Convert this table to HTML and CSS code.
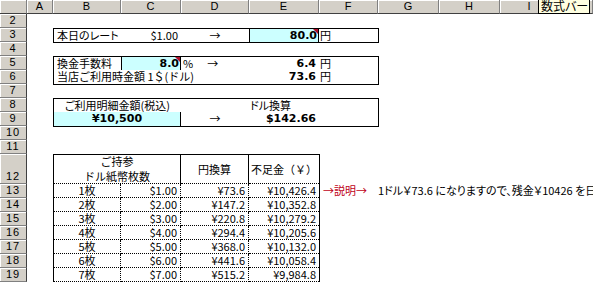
FILE: index.html
```html
<!DOCTYPE html>
<html lang="ja">
<head>
<meta charset="UTF-8">
<title>ドル換算シート</title>
<link rel="stylesheet" href="styles.css">
</head>
<body>
<div class="sheet">
	<div class="corner"></div>
	<div class="col-head">A</div>
	<div class="col-head">B</div>
	<div class="col-head">C</div>
	<div class="col-head">D</div>
	<div class="col-head">E</div>
	<div class="col-head">F</div>
	<div class="col-head">G</div>
	<div class="col-head">H</div>
	<div class="col-head">I</div>
	<div class="col-head">J</div>

	<div class="row-head">2</div>
	<div class="row-head">3</div>
	<div class="row-head">4</div>
	<div class="row-head">5</div>
	<div class="row-head">6</div>
	<div class="row-head">7</div>
	<div class="row-head">8</div>
	<div class="row-head">9</div>
	<div class="row-head">10</div>
	<div class="row-head">11</div>
	<div class="row-head tall">12</div>
	<div class="row-head">13</div>
	<div class="row-head">14</div>
	<div class="row-head">15</div>
	<div class="row-head">16</div>
	<div class="row-head">17</div>
	<div class="row-head">18</div>
	<div class="row-head">19</div>

	<!-- 本日のレート -->
	<div class="box rate">
		<div class="c">本日のレート</div>
		<div class="c num">$1.00</div>
		<div class="c mid">→</div>
		<div class="c num bold fill flag edge">80.0</div>
		<div class="c yen">円</div>
	</div>

	<!-- 手数料 -->
	<div class="box fee">
		<div class="c">換金手数料</div>
		<div class="c num bold fill flag edge">8.0</div>
		<div class="c pct"><span>%</span><span class="arrow">→</span></div>
		<div class="c num bold">6.4</div>
		<div class="c yen">円</div>
		<div class="c wide">当店ご利用時金額 1＄(ドル)</div>
		<div class="c num bold">73.6</div>
		<div class="c yen">円</div>
	</div>

	<!-- 明細 -->
	<div class="box bill">
		<div class="c mid pair">ご利用明細金額(税込)</div>
		<div class="c"></div>
		<div class="c label">ドル換算</div>
		<div class="c"></div>
		<div class="c mid pair bold fill total">¥10,500</div>
		<div class="c mid">→</div>
		<div class="c num bold">$142.66</div>
		<div class="c"></div>
	</div>

	<!-- 枚数ごとの不足金 -->
	<div class="box cash">
		<div class="th pair">ご持参<br>ドル紙幣枚数</div>
		<div class="th">円換算</div>
		<div class="th last">不足金（￥）</div>

		<div class="td mid">1枚</div><div class="td num">$1.00</div><div class="td num">¥73.6</div><div class="td num last">¥10,426.4</div>
		<div class="td mid">2枚</div><div class="td num">$2.00</div><div class="td num">¥147.2</div><div class="td num last">¥10,352.8</div>
		<div class="td mid">3枚</div><div class="td num">$3.00</div><div class="td num">¥220.8</div><div class="td num last">¥10,279.2</div>
		<div class="td mid">4枚</div><div class="td num">$4.00</div><div class="td num">¥294.4</div><div class="td num last">¥10,205.6</div>
		<div class="td mid">5枚</div><div class="td num">$5.00</div><div class="td num">¥368.0</div><div class="td num last">¥10,132.0</div>
		<div class="td mid">6枚</div><div class="td num">$6.00</div><div class="td num">¥441.6</div><div class="td num last">¥10,058.4</div>
		<div class="td mid">7枚</div><div class="td num">$7.00</div><div class="td num">¥515.2</div><div class="td num last">¥9,984.8</div>
	</div>

	<div class="note">
		<span class="mark">→説明→</span>
		<span class="text">1ドル￥73.6 になりますので、残金￥10426 を日本円でお支払いください。</span>
	</div>

	<div class="tip">数式バー</div>
</div>
</body>
</html>
```

FILE: styles.css
```css
body{
	margin: 0;
	background: #fff;
	overflow: hidden;
}
.sheet{
	position: relative;
	display: grid;
	grid-template-columns: 27px 26px 68px 60px 68px 70px 59px 61px 61px 59px 1fr;
	grid-template-rows: repeat(11, 14px) 30px repeat(7, 14px);
	width: 593px;
	height: 282px;
	font: 11px/13px "Noto Sans CJK JP", sans-serif;
	font-feature-settings: "palt";
	color: #000;
}

/* headers */
.corner, .col-head, .row-head{
	box-sizing: border-box;
	background: #d4d0c8;
	box-shadow: inset 1px 1px 0 #fff;
	font: 11px/13px "Liberation Sans", sans-serif;
	text-align: center;
}
.corner, .col-head{
	border-right: 1px solid #808080;
	border-bottom: 1px solid #404040;
}
.row-head{
	grid-column: 1;
	border-right: 1px solid #404040;
	border-bottom: 1px solid #808080;
	letter-spacing: 1px;
}
.row-head.tall{
	display: flex;
	align-items: flex-end;
	justify-content: center;
}

/* bordered blocks */
.box{
	box-sizing: border-box;
	display: grid;
	grid-template-columns: 67px 60px 68px 70px 1fr;
	margin: 0 -1px -1px 0;
	border: 1px solid #000;
}
.rate{
	grid-column: 3 / 8;
	grid-row: 3;
}
.fee{
	grid-column: 3 / 8;
	grid-row: 5 / 7;
	grid-template-rows: 13px 14px;
}
.bill{
	grid-column: 3 / 8;
	grid-row: 8 / 10;
	grid-template-rows: 13px 14px;
}
.cash{
	grid-column: 3 / 7;
	grid-row: 12 / 20;
	grid-template-columns: 67px 60px 68px 1fr;
	grid-template-rows: 29px repeat(7, 14px);
	border-bottom: 0;
}

.c{
	box-sizing: border-box;
	padding: 0 3px;
	white-space: nowrap;
}
.num{
	text-align: right;
}
.mid{
	text-align: center;
}
.bold{
	font: bold 11px/13px "DejaVu Sans", sans-serif;
}
.fill{
	background: #ccffff;
}
.edge{
	border-left: 1px solid #000;
	border-right: 1px solid #000;
	padding-right: 1px;
}
.flag{
	position: relative;
}
.flag::after{
	content: "";
	position: absolute;
	top: 0;
	right: 0;
	border-top: 5px solid #b0102a;
	border-left: 5px solid transparent;
}
.yen{
	padding-left: 1px;
}
.pct{
	display: flex;
	padding-left: 2px;
}
.pct .arrow{
	margin-left: 14px;
}
.wide{
	grid-column: 1 / 4;
	font-feature-settings: normal;
}
.pair{
	grid-column: 1 / 3;
}
.label{
	padding-left: 1px;
}
.total{
	border-right: 1px solid #000;
}

/* cash table */
.th, .td{
	box-sizing: border-box;
	border-right: 1px solid #000;
	border-bottom: 1px dotted #000;
	white-space: nowrap;
}
.th{
	display: flex;
	align-items: center;
	justify-content: center;
	text-align: center;
	line-height: 15px;
	font-feature-settings: normal;
}
.td{
	border-right-style: dotted;
	padding: 0 3px;
}
.th.last, .td.last{
	border-right: 0;
}

.note{
	grid-column: 7 / 12;
	grid-row: 13;
	display: flex;
	white-space: nowrap;
	overflow: hidden;
}
.note .mark{
	flex: none;
	width: 55px;
	padding-left: 4px;
	color: #c00018;
	font-feature-settings: normal;
}

/* hover hint over the column header */
.tip{
	position: absolute;
	left: 538px;
	top: -4px;
	width: 52px;
	height: 18px;
	box-sizing: border-box;
	padding: 2px 0 0 2px;
	background: #ffffe1;
	border: 1px solid #000;
	font-size: 12px;
	line-height: 14px;
	white-space: nowrap;
	overflow: hidden;
}
```
